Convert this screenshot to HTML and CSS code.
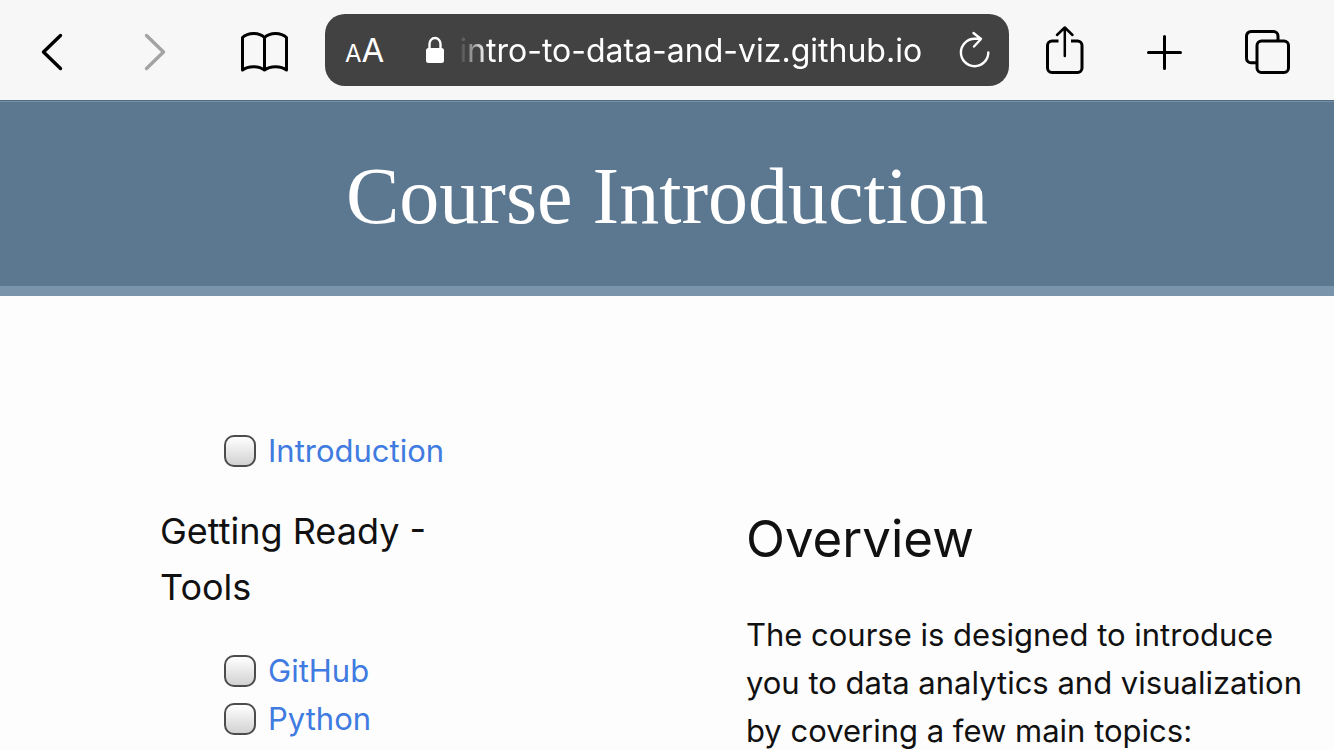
FILE: index.html
```
<!DOCTYPE html>
<html lang="en">

<head>
    <meta charset="UTF-8">
    <meta name="viewport" content="width=device-width, initial-scale=1.0">
    <title>Course Introduction</title>

    <link rel="stylesheet" href="styles.css">
</head>

<body>
    <nav class="toolbar" aria-label="Browser">
        <div class="nav-group">
            <button type="button" class="icon-button" aria-label="Back">
                <svg viewBox="0 0 50 50"><path d="M33.5 10.5 16.5 27 33.5 43.5" stroke-width="3.4"/></svg>
            </button>
            <button type="button" class="icon-button" aria-label="Forward" disabled>
                <svg viewBox="0 0 50 50"><path d="M13.5 10.5 30.5 27 13.5 43.5" stroke-width="3.4"/></svg>
            </button>
            <button type="button" class="icon-button" aria-label="Bookmarks">
                <svg viewBox="0 0 50 50"><path d="M3.5 45V12.5C9 7 20 7 25.5 12.5C31 7 42 7 47.5 12.5V45C42 40.5 31 40.5 25.5 45C20 40.5 9 40.5 3.5 45ZM25.5 12.5V45"/></svg>
            </button>
        </div>

        <div class="address">
            <button type="button" class="text-size" aria-label="Text size"><span class="small-a">A</span><span class="big-a">A</span></button>
            <svg class="lock" viewBox="0 0 20 28"><rect x="1" y="12" width="18" height="15" rx="2.5" fill="#fff"/><path d="M4.5 13V8a5.5 6 0 0 1 11 0V13" fill="none" stroke="#fff" stroke-width="2.4"/></svg>
            <input type="text" class="url" aria-label="Address" value="intro-to-data-and-viz.github.io">
            <button type="button" class="reload" aria-label="Reload">
                <svg viewBox="0 0 32 38"><path d="M29.3 21.5A13.7 13.7 0 1 1 15.6 7.8H22M14.5 2 22 8 15 15.5" stroke-width="2.4"/></svg>
            </button>
        </div>

        <div class="nav-group">
            <button type="button" class="icon-button" aria-label="Share">
                <svg viewBox="0 0 50 50"><path d="M18.5 16H12a4.5 4.5 0 0 0-4.5 4.5V43a4.5 4.5 0 0 0 4.5 4.5H37.5A4.5 4.5 0 0 0 42 43V20.5A4.5 4.5 0 0 0 37.5 16H31" stroke-linecap="butt"/><path d="M24.8 31V3M17 10 24.8 2.5 32.5 10" stroke-width="2.5"/></svg>
            </button>
            <button type="button" class="icon-button" aria-label="New tab">
                <svg viewBox="0 0 50 50"><path d="M7.5 27.5H39.5M23.5 11.5V43.5"/></svg>
            </button>
            <button type="button" class="icon-button" aria-label="Tabs">
                <svg viewBox="0 0 50 50"><path d="M15 37.8H9A4.5 4.5 0 0 1 4.5 33.3V11A4.5 4.5 0 0 1 9 6.5H31.5A4.5 4.5 0 0 1 36 11V16" stroke-linecap="butt"/><rect x="15" y="16" width="31.5" height="31.5" rx="4.5"/></svg>
            </button>
        </div>
    </nav>

    <header class="banner">
        <h1>Course Introduction</h1>
    </header>

    <div class="page">
        <aside class="sidebar">
            <ul>
                <li><input type="checkbox" id="introduction" aria-labelledby="introduction-link"><a id="introduction-link" href="#introduction">Introduction</a></li>
            </ul>
            <h3>Getting Ready - Tools</h3>
            <ul>
                <li><input type="checkbox" id="github" aria-labelledby="github-link"><a id="github-link" href="#github">GitHub</a></li>
                <li><input type="checkbox" id="python" aria-labelledby="python-link"><a id="python-link" href="#python">Python</a></li>
            </ul>
        </aside>

        <main class="content">
            <h2>Overview</h2>
            <p>The course is designed to introduce you to data analytics and visualization by covering a few main topics:</p>
        </main>
    </div>
</body>

</html>
```
FILE: styles.css
```
* {
    box-sizing: border-box;
}

body {
    display: flex;
    flex-direction: column;
    height: 100vh;
    margin: 0;
    overflow: hidden;
    background-color: #fdfdfd;
    color: #111;
    font-family: Inter, "Liberation Sans", sans-serif;
    font-size: 31px;
    line-height: 48px;
}

button {
    padding: 0;
    border: none;
    background: none;
    color: inherit;
    font: inherit;
    cursor: pointer;
}

svg {
    display: block;
}

/* Browser toolbar */
.toolbar {
    display: flex;
    align-items: center;
    flex-shrink: 0;
    padding: 14px 42px 14px 27px;
    border-bottom: 1px solid #526b80;
    background-color: #f7f7f7;
}

.nav-group {
    display: flex;
    gap: 56px;
}

.nav-group:last-child {
    gap: 51px;
}

.icon-button {
    width: 50px;
    height: 50px;
    color: #000;
}

.icon-button:disabled {
    color: #a3a3a3;
}

.icon-button svg,
.reload svg {
    fill: none;
    stroke: currentColor;
    stroke-width: 3;
    stroke-linecap: round;
    stroke-linejoin: round;
}

.address {
    display: flex;
    flex: 1;
    align-items: center;
    min-width: 0;
    height: 72px;
    margin: 0 31px 0 36px;
    padding: 0 18px 0 20px;
    border-radius: 20px;
    background-color: #424242;
    color: #fff;
}

.text-size {
    margin-right: 41px;
    padding-top: 4px;
}

.small-a {
    font-size: 24px;
}

.big-a {
    font-size: 33px;
}

.lock {
    width: 20px;
    height: 28px;
}

.url {
    flex: 1;
    min-width: 0;
    margin-left: 14px;
    padding: 2px 0 0;
    border: none;
    background: none;
    color: inherit;
    font: inherit;
    font-size: 32px;
    -webkit-mask-image: linear-gradient(to right, transparent, #000 28px);
    mask-image: linear-gradient(to right, transparent, #000 28px);
}

.reload svg {
    width: 32px;
    height: 38px;
}

/* Course page */
.banner {
    flex-shrink: 0;
    padding: 50px 40px 46px;
    border-top: 1px solid #7590a5;
    border-bottom: 10px solid #7a94ab;
    background-color: #5c7890;
    color: #fff;
    text-align: center;
}

h1,
h2,
h3 {
    margin: 0;
    font-weight: normal;
}

h1 {
    font-family: "Liberation Serif", serif;
    font-size: 80px;
    line-height: 88px;
}

.page {
    display: grid;
    grid-template-columns: 21fr 20fr;
    padding: 131px 30px 0 160px;
}

.sidebar ul {
    margin: 0;
    padding: 0 0 0 64px;
    list-style: none;
}

.sidebar li {
    display: flex;
    align-items: center;
    gap: 12px;
}

.sidebar h3 {
    max-width: 320px;
    margin: 28px 0 32px;
    font-size: 36px;
    line-height: 56px;
}

input[type="checkbox"] {
    appearance: none;
    width: 32px;
    height: 32px;
    margin: 0;
    border: 2px solid #4c4c4c;
    border-radius: 10px;
    background: linear-gradient(#fff, #d2d2d2);
}

a {
    color: #3f7be0;
    text-decoration: none;
}

.content {
    padding-top: 80px;
}

.content h2 {
    margin-bottom: 40px;
    font-size: 51px;
    line-height: 64px;
}

.content p {
    margin: 0;
}
```
